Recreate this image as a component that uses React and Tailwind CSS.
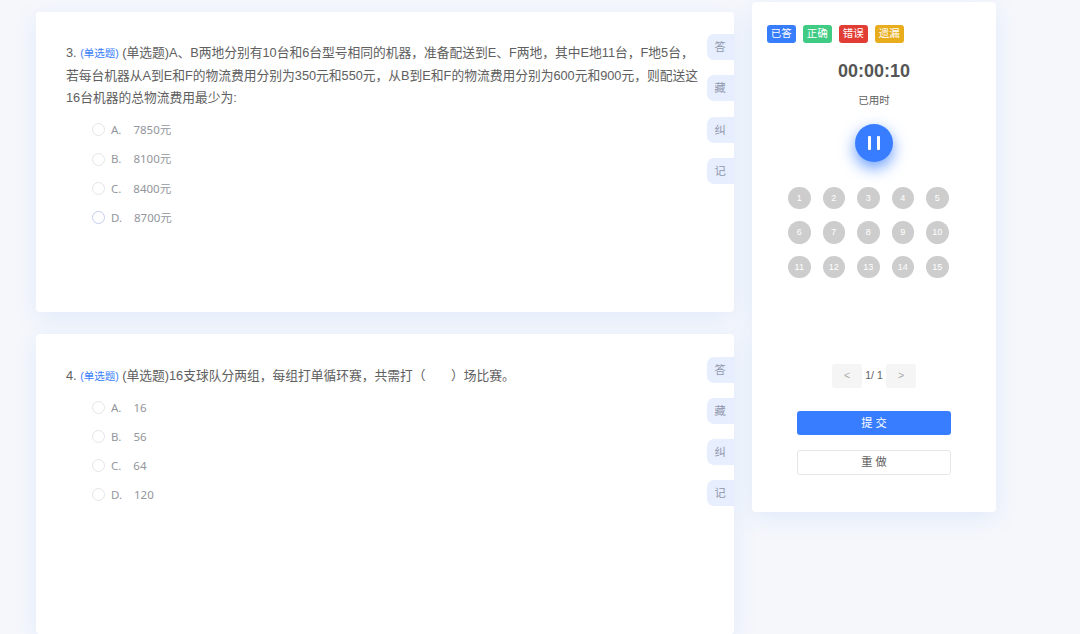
import React, { useState } from "react";

const questions = [
  {
    id: 3,
    title:
      "(单选题)A、B两地分别有10台和6台型号相同的机器，准备配送到E、F两地，其中E地11台，F地5台，若每台机器从A到E和F的物流费用分别为350元和550元，从B到E和F的物流费用分别为600元和900元，则配送这16台机器的总物流费用最少为:",
    options: ["7850元", "8100元", "8400元", "8700元"],
  },
  {
    id: 4,
    title: "(单选题)16支球队分两组，每组打单循环赛，共需打（\u3000\u3000）场比赛。",
    options: ["16", "56", "64", "120"],
  },
];

const tabs = ["答", "藏", "纠", "记"];
const letters = ["A.", "B.", "C.", "D."];

const legend = [
  { text: "已答", color: "bg-[#387dfc]" },
  { text: "正确", color: "bg-[#3fcb83]" },
  { text: "错误", color: "bg-[#e23d35]" },
  { text: "遗漏", color: "bg-[#e8ad1c]" },
];

const QuestionCard = ({ question, hovered }) => {
  const [selected, setSelected] = useState(null);

  return (
    <div className="flex h-[300px] w-[697.5px] shrink-0 rounded-[4px] bg-white shadow-[0_6px_24px_rgba(56,125,255,0.1)]">
      <div className="flex-1 pt-[30.2px] pr-[7px] pl-[30px]">
        {/* Question title */}
        <p className="text-[12.75px] leading-[22.5px] text-[#606060]">
          {`${question.id}. `}
          <span className="text-[10.5px] leading-none text-[#387dfc]">(单选题)</span>
          {` ${question.title}`}
        </p>

        {/* Options */}
        <ul className="mt-[5.5px] pl-[26px] font-['Noto_Sans','Noto_Sans_CJK_SC',sans-serif] text-[11.5px] text-[#93969c]">
          {question.options.map((option, index) => (
            <li
              key={option}
              onClick={() => setSelected(index)}
              className="flex h-[29.25px] cursor-pointer items-center"
            >
              <span
                className={`mr-[6px] size-[13px] rounded-full border ${
                  selected === index
                    ? "border-4 border-[#387dfc]"
                    : hovered === index
                      ? "border-[#c3cdec]"
                      : "border-[#e4e5ea]"
                }`}
              ></span>
              <span className="mr-[12px]">{letters[index]}</span>
              <span>{option}</span>
            </li>
          ))}
        </ul>
      </div>

      {/* Side tabs */}
      <div className="flex w-[26.5px] flex-col gap-[15.25px] pt-[22.2px]">
        {tabs.map((tab) => (
          <button
            key={tab}
            className="h-[26px] rounded-l-[7px] bg-[#e7eefe] text-[11.25px] leading-[26px] text-[#8f97ab]"
          >
            {tab}
          </button>
        ))}
      </div>
    </div>
  );
};

const AnswerSheet = () => {
  const [paused, setPaused] = useState(false);

  return (
    <div className="flex h-[510px] w-[244px] flex-col items-center rounded-[4px] bg-white pt-[22.5px] text-[#606060] shadow-[0_6px_24px_rgba(56,125,255,0.1)]">
      {/* Legend */}
      <div className="flex gap-[7.5px] self-start pl-[15px]">
        {legend.map((item) => (
          <span
            key={item.text}
            className={`h-[18.5px] w-[28.5px] rounded-[3px] text-center text-[10.5px] leading-[17.5px] text-white ${item.color}`}
          >
            {item.text}
          </span>
        ))}
      </div>

      {/* Timer */}
      <div className="mt-[17px] text-[18px] leading-[22px] font-bold text-[#555]">00:00:10</div>
      <div className="mt-[10px] text-[10.5px] leading-[16px]">已用时</div>
      <button
        onClick={() => setPaused(!paused)}
        className="mt-[15.5px] flex size-[38px] items-center justify-center gap-[6px] rounded-full bg-[#387dff] shadow-[0_6px_15px_rgba(56,125,255,0.75)]"
      >
        <span className="h-[14px] w-[3px] rounded-[1px] bg-white"></span>
        <span className="h-[14px] w-[3px] rounded-[1px] bg-white"></span>
      </button>

      {/* Question numbers */}
      <div className="mt-[25px] ml-[36px] grid grid-cols-5 gap-[12px] self-start">
        {Array.from({ length: 15 }, (_, i) => (
          <span
            key={i}
            className="size-[22.5px] rounded-full bg-[#cdcdcd] text-center text-[9px] leading-[22.5px] text-white"
          >
            {i + 1}
          </span>
        ))}
      </div>

      {/* Pager */}
      <div className="mt-[86px] flex h-[24px] items-center text-[10.5px]">
        <button className="h-[24px] w-[30px] rounded-[3px] bg-[#f5f5f5] text-[#aaa]">&lt;</button>
        <span className="w-[24px] text-center">1/ 1</span>
        <button className="h-[24px] w-[30px] rounded-[3px] bg-[#f5f5f5] text-[#aaa]">&gt;</button>
      </div>

      <button className="mt-[23px] h-[24px] w-[154px] rounded-[3px] bg-[#387dff] text-[11.25px] leading-[24px] text-white">
        提 交
      </button>
      <button className="mt-[15px] h-[24.5px] w-[154px] rounded-[3px] border border-[#e6e7ea] text-[11.25px] leading-[22px]">
        重 做
      </button>
    </div>
  );
};

const App = () => {
  return (
    <div className="flex h-screen items-start gap-[18.5px] overflow-hidden bg-[#f5f7fb] pl-[36px] font-['Liberation_Sans','Noto_Sans_CJK_SC',sans-serif]">
      <div className="flex flex-col gap-[22.4px] pt-[12px]">
        {questions.map((question) => (
          <QuestionCard
            key={question.id}
            question={question}
            hovered={question.id === 3 ? 3 : null}
          />
        ))}
      </div>
      <div className="pt-[2px]">
        <AnswerSheet />
      </div>
    </div>
  );
};

export default App;
